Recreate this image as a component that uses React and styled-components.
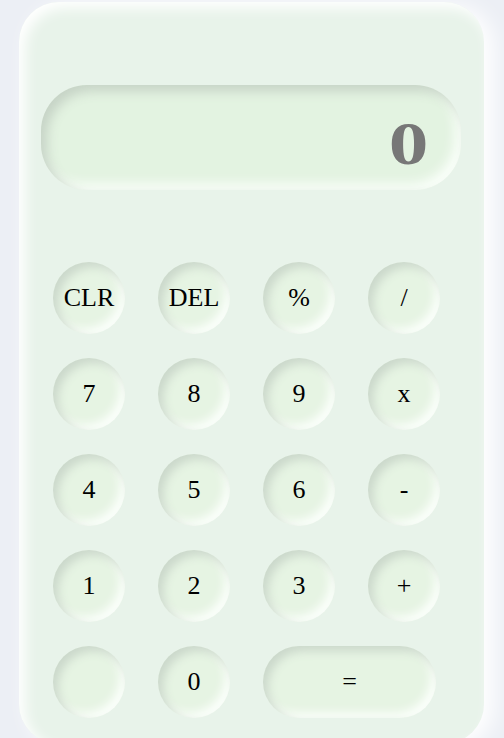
import React from "react";
import styled, { createGlobalStyle } from "styled-components";

const Global = createGlobalStyle`
  html, body { margin: 0; padding: 0; background: #eceff5; overflow: hidden; }
  * { box-sizing: border-box; }
`;

const Page = styled.div`
  display: flex;
  justify-content: center;
  padding-top: 2px;
  font-family: "Liberation Serif", "DejaVu Serif", serif;
`;

const Card = styled.div`
  width: 465px;
  height: 742px;
  margin-left: -1px;
  border-radius: 40px;
  background: #e8f3ea;
  box-shadow: inset 6px 6px 14px #ffffff, 10px 4px 22px #ffffff;
  padding: 83px 23px 0 22px;
  display: flex;
  flex-direction: column;
`;

const Display = styled.div`
  height: 105px;
  border-radius: 46px;
  background: #e3f3e1;
  box-shadow: inset 6px 6px 12px #c6d3c6, inset -6px -6px 12px #fbfffb;
  display: flex;
  align-items: center;
  justify-content: flex-end;
  padding: 12px 33px 0 0;
`;

const Readout = styled.span`
  color: #777777;
  font-size: 61px;
  font-weight: 700;
  line-height: 1;
  transform: scaleX(1.3);
  transform-origin: right center;
`;

const Keypad = styled.div`
  margin-top: 72px;
  padding-left: 12px;
  display: grid;
  grid-template-columns: repeat(4, 72px);
  grid-auto-rows: 72px;
  column-gap: 33px;
  row-gap: 24px;
`;

const Key = styled.button`
  border: none;
  padding: 0;
  width: ${(p) => (p.$wide ? "173px" : "72px")};
  height: 72px;
  grid-column: ${(p) => (p.$wide ? "span 2" : "auto")};
  border-radius: 36px;
  background: #e6f4e3;
  box-shadow: inset 5px 5px 10px #cbd8cb, inset -5px -5px 10px #fcfffc;
  font-family: "Liberation Serif", "DejaVu Serif", serif;
  font-size: 26px;
  color: #000;
  display: flex;
  align-items: center;
  justify-content: center;
  cursor: pointer;
`;

const keys = [
  "CLR", "DEL", "%", "/",
  "7", "8", "9", "x",
  "4", "5", "6", "-",
  "1", "2", "3", "+",
  "", "0",
];

export default function App() {
  return (
    <>
      <Global />
      <Page>
        <Card>
          <Display>
            <Readout>0</Readout>
          </Display>
          <Keypad>
            {keys.map((k, i) => (
              <Key key={i}>{k}</Key>
            ))}
            <Key $wide>=</Key>
          </Keypad>
        </Card>
      </Page>
    </>
  );
}
